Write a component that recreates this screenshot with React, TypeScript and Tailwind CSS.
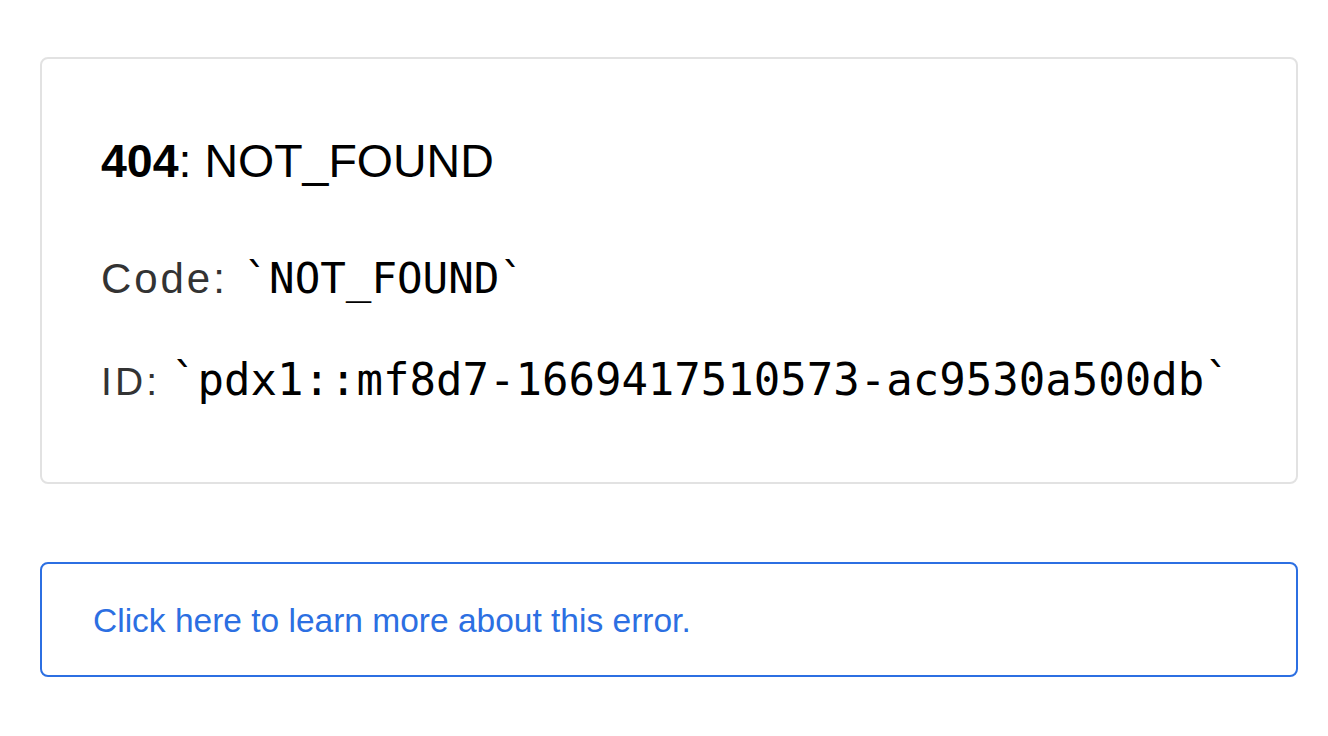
export default function App() {
  return (
    <div className="min-h-screen bg-white pl-[40px] pt-[57px] font-['Liberation_Sans',Arial,sans-serif]">
      <div className="box-border h-[427px] w-[1258px] rounded-lg border-2 border-[#e2e2e2] pl-[59px] pt-[76px]">
        <h1 className="text-[46.5px] leading-[52px] text-black">
          <span className="font-bold">404</span>: NOT_FOUND
        </h1>
        <p className="mt-[67px] text-[42px] leading-[50px] text-[#333]">
          <span className="tracking-[0.07em]">Code:</span>{" "}
          <code className="ml-[4px] font-['DejaVu_Sans_Mono',monospace] text-[42.5px] text-black">`NOT_FOUND`</code>
        </p>
        <p className="mt-[51px] text-[39px] leading-[50px] text-[#333]">
          <span className="tracking-[0.08em]">ID:</span>{" "}
          <code className="font-['DejaVu_Sans_Mono',monospace] text-[44px] text-black">
            `pdx1::mf8d7-1669417510573-ac9530a500db`
          </code>
        </p>
      </div>
      <a
        href="#"
        className="mt-[78px] box-border flex h-[115px] w-[1258px] items-center rounded-lg border-2 border-[#2c6fe2] pl-[51px] pt-[4px] text-[33.5px] text-[#2c6fe2]"
      >
        Click here to learn more about this error.
      </a>
    </div>
  );
}
